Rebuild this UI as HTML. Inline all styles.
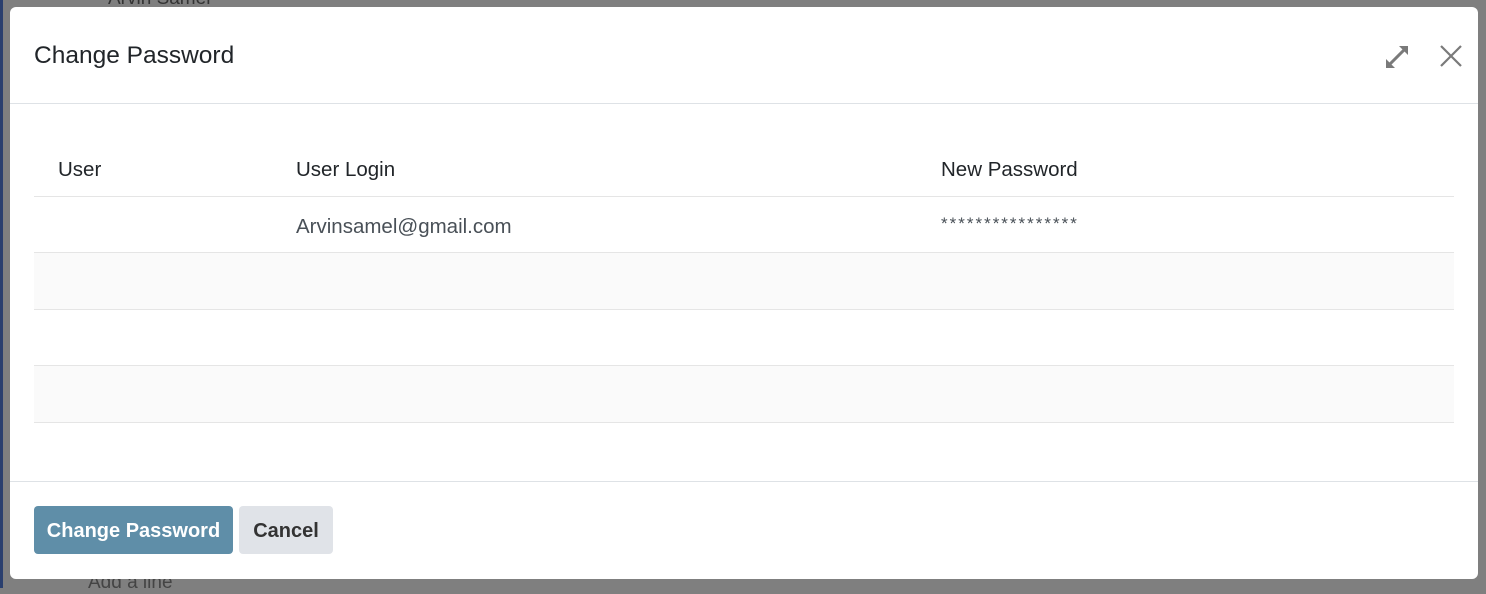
<!DOCTYPE html>
<html><head><style>
body{margin:0;width:1486px;height:588px;background:#7f7f7f;position:relative;overflow:hidden;font-family:"Liberation Sans",sans-serif;}
.strip{position:absolute;left:0;top:0;width:3px;height:588px;background:#2a3f6e}
.bgtxt{position:absolute;left:108px;top:-12px;font-size:19px;color:#333}
.bgtxt2{position:absolute;left:88px;top:572px;font-size:19px;color:#444}
.modal{position:absolute;left:10px;top:7px;width:1468px;height:572px;background:#fff;border-radius:6px;overflow:hidden}
.title{position:absolute;left:24px;top:35px;font-size:24.5px;color:#212529}
.hr{position:absolute;left:0;width:1468px;height:1px;background:#dee2e6}
.th{position:absolute;top:151px;font-size:20.5px;color:#212529}
.row{position:absolute;left:24px;width:1420px;border-bottom:1px solid #e5e5e5}
.td{position:absolute;font-size:20.5px;color:#495057}
.btn{position:absolute;top:499px;height:48px;border-radius:4px;font-size:20px;font-weight:bold;line-height:50px;text-align:center}
</style></head><body>
<div class="strip"></div>
<div class="bgtxt">Arvin Samel</div>
<div class="bgtxt2">Add a line</div>
<div class="modal">
<div class="title">Change Password</div>
<svg style="position:absolute;left:1373px;top:36px" width="28" height="28" viewBox="0 0 28 28"><g stroke="#7a7a7a" stroke-width="3" fill="#7a7a7a"><line x1="5" y1="23" x2="23" y2="5"/><path d="M16 3h9v9z" stroke="none"/><path d="M3 16v9h9z" stroke="none"/></g></svg>
<svg style="position:absolute;left:1428px;top:36px" width="26" height="26" viewBox="0 0 26 26"><g stroke="#7a7a7a" stroke-width="2.2"><line x1="3" y1="3" x2="23" y2="23"/><line x1="23" y1="3" x2="3" y2="23"/></g></svg>
<div class="hr" style="top:96px"></div>
<div class="th" style="left:48px">User</div>
<div class="th" style="left:286px">User Login</div>
<div class="th" style="left:931px">New Password</div>
<div class="row" style="top:133px;height:56px"></div>
<div class="row" style="top:190px;height:55px"></div>
<div class="row" style="top:246px;height:56px;background:#fafafa"></div>
<div class="row" style="top:303px;height:55px"></div>
<div class="row" style="top:359px;height:56px;background:#fafafa"></div>
<div class="td" style="left:286px;top:208px">Arvinsamel@gmail.com</div>
<div class="td" style="left:931px;top:207px;font-size:17px;letter-spacing:2px">****************</div>
<div class="hr" style="top:474px"></div>
<div class="btn" style="left:24px;width:199px;background:#5f8ea8;color:#fff">Change Password</div>
<div class="btn" style="left:229px;width:94px;background:#e0e3e8;color:#333">Cancel</div>
</div>
</body></html>
